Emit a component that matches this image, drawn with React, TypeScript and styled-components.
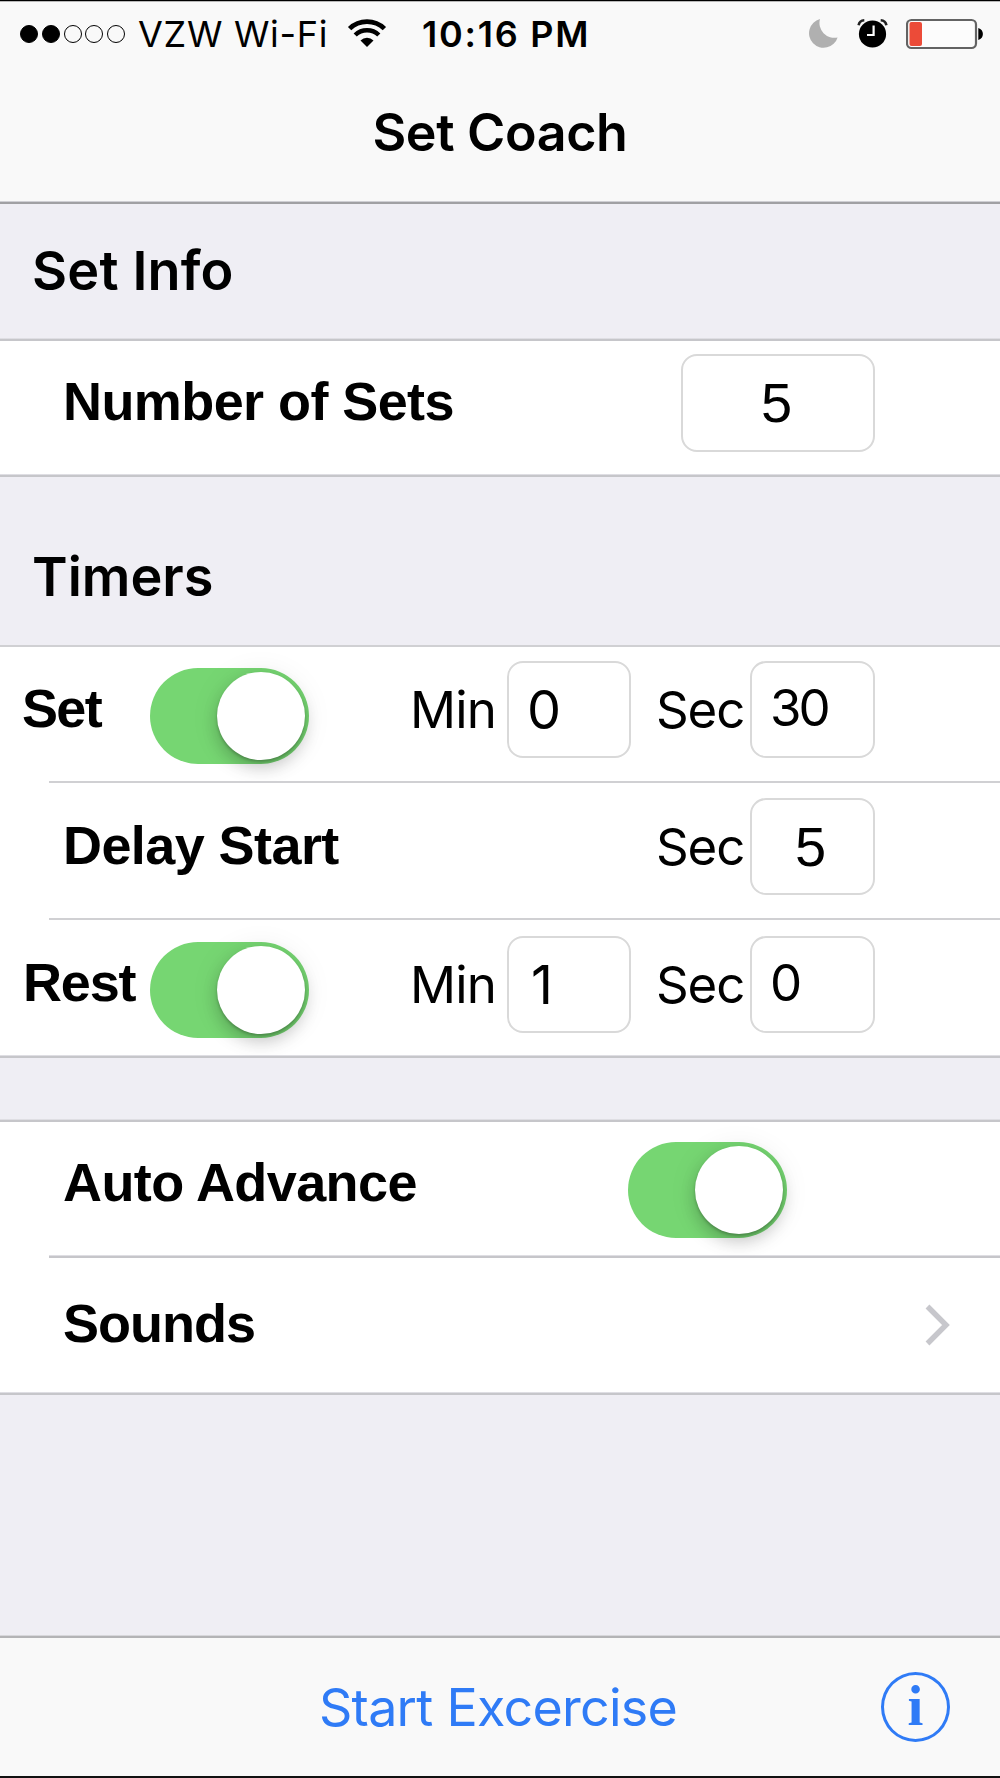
import React from "react";
import styled, { createGlobalStyle } from "styled-components";

const GlobalStyle = createGlobalStyle`
  * { box-sizing: border-box; }
  body { margin: 0; background: #efeef4; }
`;

const Screen = styled.div`
  width: 1000px;
  height: 1778px;
  display: flex;
  flex-direction: column;
  background: #efeef4;
  color: #000;
  border-top: 1px solid #000;
  border-bottom: 2px solid #111;
  overflow: hidden;
`;

type TextProps = {
  $face?: "ui" | "helv";
  $size: number;
  $weight?: number;
  $track?: number;
  $left?: number;
  $top?: number;
};

const Text = styled.span<TextProps>`
  display: block;
  white-space: nowrap;
  line-height: 60px;
  font-family: ${(p) =>
    p.$face === "helv"
      ? '"Liberation Sans", Arial, sans-serif'
      : 'Inter, "Liberation Sans", sans-serif'};
  font-size: ${(p) => p.$size}px;
  font-weight: ${(p) => p.$weight ?? 400};
  letter-spacing: ${(p) => p.$track ?? 0}px;
  margin-left: ${(p) => p.$left ?? 0}px;
  margin-top: ${(p) => p.$top ?? 0}px;
  width: max-content;
`;

const RowLabel = styled(Text).attrs({ $face: "helv", $size: 54, $weight: 700 })``;

const Header = styled.header`
  height: 200px;
  background: #f9f9f9;
  display: flex;
  flex-direction: column;
  border-top: 1px solid #b8b8b8;
`;

const StatusBar = styled.div`
  height: 64px;
  display: grid;
  grid-template-columns: 20px 118px 209px 75px 387px 46px 51px 78px;
  align-items: start;
`;

const Signal = styled.div`
  grid-column: 2;
  display: flex;
  gap: 3.8px;
  padding-top: 23px;
`;

const Dot = styled.i<{ $on?: boolean }>`
  width: 18px;
  height: 18px;
  border-radius: 50%;
  border: 1px solid #000;
  background: ${(p) => (p.$on ? "#000" : "transparent")};
`;

const IconSlot = styled.div`
  padding-top: 14px;
  svg { display: block; }
`;

const TitleBar = styled.div`
  flex: 1;
  display: flex;
  justify-content: center;
`;

const Rule = styled.div<{ $tone?: string; $inset?: boolean; $thin?: boolean }>`
  flex: none;
  height: ${(p) => (p.$thin ? 2 : 3)}px;
  border-left: ${(p) => (p.$inset ? 49 : 0)}px solid #fff;
  background: linear-gradient(
      ${(p) => p.$tone ?? "#c6c6ca"}66 0 1px,
      ${(p) => p.$tone ?? "#c6c6ca"} 1px 3px
    )
    padding-box;
  ${(p) => p.$thin && "background: #d0d0d3 padding-box;"}
`;

const SectionHead = styled.div<{ $h: number }>`
  flex: none;
  height: ${(p) => p.$h}px;
`;

const Row = styled.div<{ $h: number; $cols: string }>`
  flex: none;
  height: ${(p) => p.$h}px;
  background: #fff;
  display: grid;
  grid-template-columns: ${(p) => p.$cols};
  align-items: start;
`;

const LabelCell = styled.div<{ $span: number }>`
  grid-column: span ${(p) => p.$span};
`;

const Field = styled.div<{ $w: number; $h?: number; $top: number }>`
  width: ${(p) => p.$w}px;
  height: ${(p) => p.$h ?? 97}px;
  margin-top: ${(p) => p.$top}px;
  border: 2px solid #d9d9d9;
  border-radius: 16px;
  background: #fff;
`;

const Switch = styled.div<{ $top: number }>`
  width: 159px;
  height: 96px;
  margin-top: ${(p) => p.$top}px;
  border-radius: 48px;
  background: #76d672;
  padding: 4px 4px 4px 67px;
`;

const Knob = styled.div`
  width: 88px;
  height: 88px;
  border-radius: 50%;
  background: #fff;
  box-shadow: 0 8px 16px rgba(0, 0, 0, 0.18), 0 2px 3px rgba(0, 0, 0, 0.22),
    0 2px 30px rgba(0, 0, 0, 0.08);
`;

const Toggle = ({ top }: { top: number }) => (
  <Switch $top={top}>
    <Knob />
  </Switch>
);

const Chevron = styled.svg`
  display: block;
  margin-top: 45px;
`;

const Spacer = styled.div`
  flex: 1;
`;

const Footer = styled.footer`
  flex: none;
  height: 138px;
  background: #f9f9f9;
  color: #2f7bf6;
  display: grid;
  grid-template-columns: 881px 119px;
  align-items: start;
`;

const InfoButton = styled.div`
  width: 69px;
  height: 70px;
  margin-top: 34px;
  border: 3px solid #2f7bf6;
  border-radius: 50%;
  display: flex;
  justify-content: center;
`;

const InfoLetter = styled.span`
  font: bold 57px/62px "Liberation Serif", serif;
`;

const Wifi = () => (
  <svg width="40" height="32" viewBox="0 0 40 32" fill="none" stroke="#000">
    <path d="M2.600 12.600A25 25 0 0 1 37.400 12.600" strokeWidth="4.800" />
    <path d="M8.200 19A16.800 16.800 0 0 1 31.800 19" strokeWidth="4.500" />
    <path d="M20 31l-6.500-6.600a9.200 9.200 0 0 1 13 0z" fill="#000" stroke="none" />
  </svg>
);

const Moon = () => (
  <svg width="30" height="34" viewBox="809 16 30 34">
    <path
      d="M820 19A14.600 14.600 0 1 0 837.600 37.400A14.800 14.800 0 0 1 820 19z"
      fill="#b0b0b0"
    />
  </svg>
);

const Alarm = () => (
  <svg width="34" height="34" viewBox="855 16 34 34">
    <circle cx="872.5" cy="34" r="13.6" fill="#000" />
    <path
      d="M858.600 25.200Q859.500 20.400 864.300 20.200M880.700 20.200Q885.500 20.400 886.400 25.200"
      fill="none"
      stroke="#222"
      strokeWidth="2.6"
    />
    <path d="M873.600 25.500V35H867" fill="none" stroke="#fff" strokeWidth="2.2" />
  </svg>
);

const Battery = () => (
  <svg width="80" height="34" viewBox="906 16 80 34">
    <rect
      x="907"
      y="20"
      width="69"
      height="28"
      rx="4.500"
      fill="#fcfcfc"
      stroke="#636363"
      strokeWidth="2.2"
    />
    <rect x="909.5" y="22" width="12.500" height="24" rx="2" fill="#ec4b38" />
    <path d="M978.300 28C984.400 29.500 984.400 38.500 978.300 40z" fill="#000" />
  </svg>
);

const timerCols = "150px 260px 97px 149px 94px 125px";

export default function App() {
  return (
    <>
      <GlobalStyle />
      <Screen>
        <Header>
          <StatusBar>
            <Signal>
              <Dot $on />
              <Dot $on />
              <Dot />
              <Dot />
              <Dot />
            </Signal>
            <Text $size={36} $track={0.7} $top={2}>VZW Wi-Fi</Text>
            <IconSlot>
              <Wifi />
            </IconSlot>
            <Text $size={36} $weight={600} $track={1.75} $top={2}>10:16 PM</Text>
            <IconSlot>
              <Moon />
            </IconSlot>
            <IconSlot>
              <Alarm />
            </IconSlot>
            <IconSlot>
              <Battery />
            </IconSlot>
          </StatusBar>
          <TitleBar>
            <Text $size={52} $weight={600} $track={-0.37} $top={37}>Set Coach</Text>
          </TitleBar>
        </Header>
        <Rule $tone="#a0a0a3" />

        <SectionHead $h={134}>
          <Text $size={54} $weight={600} $track={0.17} $left={32} $top={37}>Set Info</Text>
        </SectionHead>
        <Rule />
        <Row $h={133} $cols="681px 319px">
          <RowLabel $track={-0.58} $left={63} $top={30}>Number of Sets</RowLabel>
          <Field $w={194} $h={98} $top={13}>
            <Text $face="helv" $size={56} $left={78} $top={17}>5</Text>
          </Field>
        </Row>
        <Rule />

        <SectionHead $h={168}>
          <Text $size={54} $weight={600} $left={32} $top={70}>Timers</Text>
        </SectionHead>
        <Rule $thin />
        <Row $h={134} $cols={timerCols}>
          <RowLabel $track={-1.7} $left={22} $top={31}>Set</RowLabel>
          <Toggle top={21} />
          <Text $size={51} $track={-0.8} $top={33}>Min</Text>
          <Field $w={124} $top={14}>
            <Text $size={54} $left={18} $top={17}>0</Text>
          </Field>
          <Text $size={51} $track={-1.1} $top={33}>Sec</Text>
          <Field $w={125} $top={14}>
            <Text $size={51} $track={-3} $left={18} $top={15}>30</Text>
          </Field>
        </Row>
        <Rule $inset $thin />
        <Row $h={135} $cols={timerCols}>
          <LabelCell $span={4}>
            <RowLabel $track={-0.58} $left={63} $top={32}>Delay Start</RowLabel>
          </LabelCell>
          <Text $size={51} $track={-1.1} $top={34}>Sec</Text>
          <Field $w={125} $top={15}>
            <Text $face="helv" $size={56} $left={43} $top={17}>5</Text>
          </Field>
        </Row>
        <Rule $inset $thin />
        <Row $h={135} $cols={timerCols}>
          <RowLabel $track={-1.2} $left={23} $top={32}>Rest</RowLabel>
          <Toggle top={22} />
          <Text $size={51} $track={-0.8} $top={35}>Min</Text>
          <Field $w={124} $top={16}>
            <Text $size={54} $left={22} $top={17}>1</Text>
          </Field>
          <Text $size={51} $track={-1.1} $top={35}>Sec</Text>
          <Field $w={125} $top={16}>
            <Text $size={51} $left={18} $top={15}>0</Text>
          </Field>
        </Row>
        <Rule />

        <SectionHead $h={61} />
        <Rule />
        <Row $h={133} $cols="628px 372px">
          <RowLabel $track={-0.6} $left={63} $top={30}>Auto Advance</RowLabel>
          <Toggle top={20} />
        </Row>
        <Rule $inset />
        <Row $h={134} $cols="921px 79px">
          <RowLabel $track={-1} $left={63} $top={35}>Sounds</RowLabel>
          <Chevron width="32" height="44" viewBox="921.500 1303 32 44">
            <path
              d="M928 1306.500L946.500 1325L928 1343.500"
              fill="none"
              stroke="#c7c7cc"
              strokeWidth="5.4"
            />
          </Chevron>
        </Row>
        <Rule />

        <Spacer />
        <Rule $tone="#b4b4b6" />
        <Footer>
          <Text $size={52} $track={-0.74} $left={319} $top={40}>Start Excercise</Text>
          <InfoButton>
            <InfoLetter>i</InfoLetter>
          </InfoButton>
        </Footer>
      </Screen>
    </>
  );
}
